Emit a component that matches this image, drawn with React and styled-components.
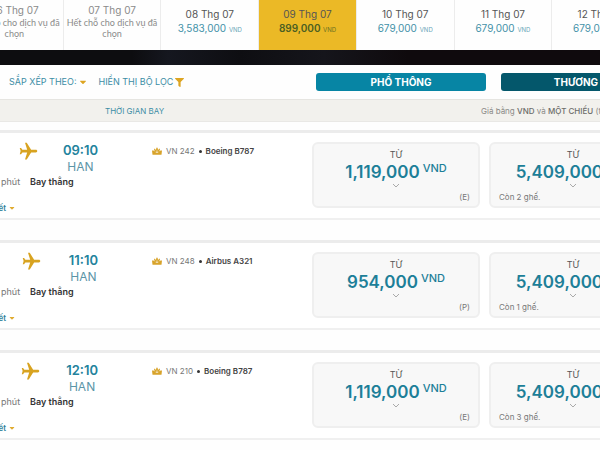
import React, { useState } from "react";
import styled, { createGlobalStyle } from "styled-components";
import { FaCaretDown, FaFilter } from "react-icons/fa";
import { MdFlight } from "react-icons/md";

const GlobalStyle = createGlobalStyle`
  * {
    box-sizing: border-box;
  }
  body {
    margin: 0;
    overflow-x: hidden;
    background: #fefefe;
    color: #555;
    font-family: Inter, "Noto Sans", sans-serif;
    font-size: 9px;
  }
  button {
    margin: 0;
    padding: 0;
    border: none;
    background: none;
    color: inherit;
    font: inherit;
    cursor: pointer;
  }
`;

const Page = styled.main`
  overflow: hidden;
`;

// --- Date strip ---

const DateStrip = styled.nav`
  display: grid;
  grid-template-columns: repeat(7, minmax(0, 1fr));
  width: 114%;
  height: 50px;
  margin-left: -34px;
`;

const DateTab = styled.button`
  display: flex;
  flex-direction: column;
  align-items: center;
  justify-content: ${({ $soldOut }) => ($soldOut ? "flex-start" : "center")};
  padding: ${({ $soldOut }) => ($soldOut ? "4px 0 0" : "0 0 5px")};
  border-right: 1px solid #ececec;
  background: ${({ $active }) => ($active ? "#ebb926" : "#fefefe")};
  color: ${({ $soldOut }) => ($soldOut ? "#8a8a8a" : "#555")};
`;

const DateLabel = styled.span`
  font-size: 10px;
  line-height: 13px;
`;

const SoldOutNote = styled.span`
  font-family: Lato, "Noto Sans", sans-serif;
  font-size: 9px;
  line-height: 11px;
  white-space: nowrap;
`;

const DatePrice = styled.span`
  color: ${({ $active }) => ($active ? "#4c5f22" : "#4391a8")};
  font-size: 10px;
  font-weight: ${({ $active }) => ($active ? 600 : 400)};
  line-height: 14px;

  small {
    font-size: 6px;
    font-weight: 400;
    opacity: 0.8;
  }
`;

const Banner = styled.div`
  height: 15px;
  background: linear-gradient(90deg, #0d0d10 0%, #0d0d10 22%, #15171f 28%, #0e0e12 40%, #15151b 54%, #0f0a0d 68%, #0f0a0d 100%);
`;

// --- Toolbar ---

const columns = `
  display: grid;
  grid-template-columns: 52% 1fr;
`;

const Toolbar = styled.div`
  ${columns}
  align-items: center;
  height: 34px;
`;

const Filters = styled.div`
  display: flex;
  gap: 10px;
  padding-left: 9px;
`;

const FilterButton = styled.button`
  display: flex;
  align-items: center;
  gap: 2px;
  color: #3c8da5;
  font-size: 9px;
  line-height: 12px;
  white-space: nowrap;

  svg {
    color: #dda522;
  }
`;

const Cabins = styled.div`
  display: flex;
  gap: 15px;
  padding-left: 4px;
`;

const CabinButton = styled.button`
  flex: 0 0 170px;
  height: 18px;
  border-radius: 3px;
  background: ${({ $business }) => ($business ? "#04576b" : "#0785a4")};
  color: #fff;
  font-size: 10px;
  font-weight: 700;
`;

const SubHeader = styled.div`
  ${columns}
  align-items: center;
  height: 23px;
  border-top: 1px solid #e6e5e1;
  border-bottom: 1px solid #e9e8e5;
  background: #f2f1ed;
  font-size: 8px;
  white-space: nowrap;
`;

const FlightTimeLabel = styled.span`
  padding-left: 105px;
  color: #3c8da5;
`;

const PriceNote = styled.span`
  padding-left: 169px;
  color: #8a8a87;

  strong {
    color: #6c6c6a;
    font-weight: 500;
  }
`;

// --- Flights ---

const FlightList = styled.div`
  display: flex;
  flex-direction: column;
  gap: 20px;
  padding-top: 8px;
`;

const FlightCard = styled.article`
  ${columns}
  height: 90px;
  border-top: 3px solid #ececec;
  border-bottom: 2px solid #f0f0f0;
  background: #fff;
`;

const FlightInfo = styled.div`
  display: grid;
  grid-template-columns: 98px 1fr;
  grid-template-rows: 42px 14px 26px;
  align-content: start;
  column-gap: 54px;
`;

const Arrival = styled.div`
  display: flex;
  margin-left: -5px;
  padding-top: 8px;
`;

const PlaneCell = styled.div`
  flex: 1;
  display: flex;
  justify-content: center;
  color: #d8a320;

  svg {
    transform: rotate(90deg);
  }
`;

const ArrivalText = styled.div`
  display: flex;
  flex-direction: column;
  align-items: center;
`;

const Time = styled.span`
  color: #23839d;
  font-size: 13px;
  font-weight: 600;
  line-height: 18px;
`;

const Airport = styled.span`
  color: #5c95a7;
  font-size: 12px;
  line-height: 16px;
`;

const Aircraft = styled.div`
  display: flex;
  align-items: center;
  gap: 4px;
  height: 14px;
  margin-top: 11px;
  color: #777;
  font-size: 8px;
  white-space: nowrap;

  b {
    color: #444;
    font-weight: 600;
  }
`;

const Dot = styled.span`
  width: 3px;
  height: 3px;
  border-radius: 50%;
  background: #333;
`;

const Duration = styled.div`
  grid-column: 1 / -1;
  display: flex;
  gap: 10px;
  padding-left: 1px;
  color: #777;
  font-size: 9px;
  line-height: 14px;

  b {
    color: #333;
    font-weight: 600;
  }
`;

const DetailsButton = styled.button`
  grid-column: 1;
  align-self: end;
  display: flex;
  align-items: center;
  justify-content: flex-end;
  gap: 2px;
  width: 16px;
  color: #2f8199;
  font-size: 8px;
  font-weight: 600;
  line-height: 14px;
  white-space: nowrap;

  svg {
    flex-shrink: 0;
    color: #e0ab2f;
  }
`;

const Fares = styled.div`
  display: flex;
  gap: 9px;
  padding-top: 9px;
`;

const FareButton = styled.button`
  flex: 0 0 168px;
  display: flex;
  flex-direction: column;
  align-items: center;
  height: 66px;
  padding: 4px 8px 3px;
  border: 2px solid #efefef;
  border-radius: 6px;
  background: #f8f8f8;
`;

const FareFrom = styled.span`
  color: #555;
  font-size: 9px;
  line-height: 13px;
`;

const FarePrice = styled.span`
  display: flex;
  align-items: flex-start;
  gap: 3px;
  color: #1d7f98;
  font-size: 17px;
  font-weight: 600;
  line-height: 22px;

  small {
    font-size: 11px;
    font-weight: 500;
    line-height: 15px;
  }
`;

const FareFooter = styled.span`
  display: flex;
  justify-content: ${({ $end }) => ($end ? "flex-end" : "flex-start")};
  align-self: stretch;
  margin-top: auto;
  color: #777;
  font-size: 8px;
  line-height: 12px;
`;

const LotusIcon = () => (
  <svg width="10" height="8" viewBox="0 0 20 15" fill="#d8a32a" aria-hidden="true">
    <path d="M10 0c2.400 2.600 2.800 6 0 10C7.200 6 7.600 2.600 10 0z" />
    <path d="M4 2.500c3 .8 4.800 3 5.200 8C5.800 9.400 4 6.600 4 2.500zM16 2.500c-3 .8-4.800 3-5.200 8 3.400-1.100 5.200-3.900 5.200-8z" />
    <path d="M0 6.500c3.600 0 6.300 1 8 4.300l4 0c1.700-3.300 4.400-4.300 8-4.300L19 15H1z" />
  </svg>
);

const ChevronIcon = () => (
  <svg width="8" height="5" viewBox="0 0 8 5" fill="none" stroke="#aaa" aria-hidden="true">
    <path d="M1 1l3 3 3-3" />
  </svg>
);

// --- Data ---
const DATES = [
  { id: "06", soldOut: true },
  { id: "07", soldOut: true },
  { id: "08", price: "3,583,000" },
  { id: "09", price: "899,000" },
  { id: "10", price: "679,000" },
  { id: "11", price: "679,000" },
  { id: "12", price: "679,000" },
];

const FLIGHTS = [
  { number: "VN 242", time: "09:10", aircraft: "Boeing B787", economy: "1,119,000", code: "(E)", business: "5,409,000", seats: 2 },
  { number: "VN 248", time: "11:10", aircraft: "Airbus A321", economy: "954,000", code: "(P)", business: "5,409,000", seats: 1 },
  { number: "VN 210", time: "12:10", aircraft: "Boeing B787", economy: "1,119,000", code: "(E)", business: "5,409,000", seats: 3 },
];

function Fare({ price, note, end }) {
  return (
    <FareButton type="button">
      <FareFrom>TỪ</FareFrom>
      <FarePrice>
        {price}
        <small>VND</small>
      </FarePrice>
      <ChevronIcon />
      <FareFooter $end={end}>{note}</FareFooter>
    </FareButton>
  );
}

function App() {
  const [selected, setSelected] = useState("09");

  return (
    <Page>
      <GlobalStyle />
      <DateStrip>
        {DATES.map(({ id, price, soldOut }) => (
          <DateTab
            key={id}
            type="button"
            $active={id === selected}
            $soldOut={soldOut}
            onClick={() => !soldOut && setSelected(id)}
          >
            <DateLabel>{id} Thg 07</DateLabel>
            {soldOut ? (
              <SoldOutNote>
                Hết chỗ cho dịch vụ đã
                <br />
                chọn
              </SoldOutNote>
            ) : (
              <DatePrice $active={id === selected}>
                {price} <small>VND</small>
              </DatePrice>
            )}
          </DateTab>
        ))}
      </DateStrip>
      <Banner />

      <Toolbar>
        <Filters>
          <FilterButton type="button">
            SẮP XẾP THEO: <FaCaretDown size={10} />
          </FilterButton>
          <FilterButton type="button">
            HIỂN THỊ BỘ LỌC <FaFilter size={9} />
          </FilterButton>
        </Filters>
        <Cabins>
          <CabinButton type="button">PHỔ THÔNG</CabinButton>
          <CabinButton type="button" $business>THƯƠNG GIA</CabinButton>
        </Cabins>
      </Toolbar>
      <SubHeader>
        <FlightTimeLabel>THỜI GIAN BAY</FlightTimeLabel>
        <PriceNote>
          Giá bằng <strong>VND</strong> và <strong>MỘT CHIỀU</strong> (thuế và phí)
        </PriceNote>
      </SubHeader>

      <FlightList>
        {FLIGHTS.map((flight) => (
          <FlightCard key={flight.number}>
            <FlightInfo>
              <Arrival>
                <PlaneCell>
                  <MdFlight size={21} />
                </PlaneCell>
                <ArrivalText>
                  <Time>{flight.time}</Time>
                  <Airport>HAN</Airport>
                </ArrivalText>
              </Arrival>
              <Aircraft>
                <LotusIcon />
                <span>{flight.number}</span>
                <Dot />
                <b>{flight.aircraft}</b>
              </Aircraft>
              <Duration>
                <span>phút</span>
                <b>Bay thẳng</b>
              </Duration>
              <DetailsButton type="button">
                Chi tiết <FaCaretDown size={8} />
              </DetailsButton>
            </FlightInfo>
            <Fares>
              <Fare price={flight.economy} note={flight.code} end />
              <Fare price={flight.business} note={`Còn ${flight.seats} ghế.`} />
            </Fares>
          </FlightCard>
        ))}
      </FlightList>
    </Page>
  );
}

export default App;
